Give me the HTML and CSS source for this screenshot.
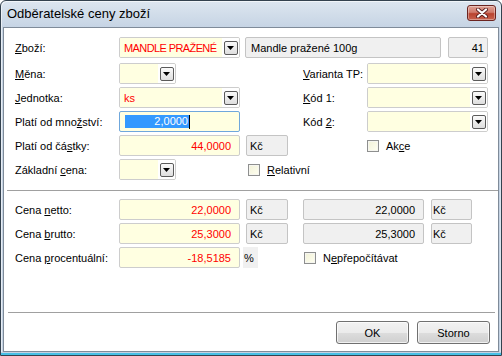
FILE: index.html
```html
<!DOCTYPE html>
<html lang="cs">
<head>
<meta charset="utf-8">
<title>Odběratelské ceny zboží</title>
<link rel="stylesheet" href="styles.css">
</head>
<body>
<div class="window">
  <div class="titlebar">
    <span class="title">Odběratelské ceny zboží</span>
    <div class="close">
      <svg width="14" height="10" viewBox="0 0 14 10">
        <path d="M3 1.5 L11 8.5 M11 1.5 L3 8.5" stroke="#5a1f1f" stroke-width="4" stroke-linecap="round"/>
        <path d="M3 1.5 L11 8.5 M11 1.5 L3 8.5" stroke="#ffffff" stroke-width="2.2" stroke-linecap="round"/>
      </svg>
    </div>
  </div>
  <div class="client">
    <div class="section top">
      <div class="row first">
        <span class="lbl"><u>Z</u>boží:</span>
        <div class="field combo w121"><span class="edit red caps">MANDLE PRAŽENÉ</span><span class="btnarea"><span class="ddbtn"><svg width="7" height="4" viewBox="0 0 7 4"><polygon points="0,0 7,0 3.5,4" fill="#000"/></svg></span></span></div>
        <div class="grey wide">Mandle pražené 100g</div>
        <div class="grey num41">41</div>
      </div>
      <div class="row">
        <span class="lbl"><u>M</u>ěna:</span>
        <div class="field combo w57"><span class="edit"></span><span class="btnarea"><span class="ddbtn"><svg width="7" height="4" viewBox="0 0 7 4"><polygon points="0,0 7,0 3.5,4" fill="#000"/></svg></span></span></div>
        <div class="rcol">
          <span class="rlbl"><u>V</u>arianta TP:</span>
          <div class="field combo w121"><span class="edit"></span><span class="btnarea"><span class="ddbtn"><svg width="7" height="4" viewBox="0 0 7 4"><polygon points="0,0 7,0 3.5,4" fill="#000"/></svg></span></span></div>
        </div>
      </div>
      <div class="row">
        <span class="lbl"><u>J</u>ednotka:</span>
        <div class="field combo w121"><span class="edit red">ks</span><span class="btnarea"><span class="ddbtn"><svg width="7" height="4" viewBox="0 0 7 4"><polygon points="0,0 7,0 3.5,4" fill="#000"/></svg></span></span></div>
        <div class="rcol">
          <span class="rlbl"><u>K</u>ód 1:</span>
          <div class="field combo w121"><span class="edit"></span><span class="btnarea"><span class="ddbtn"><svg width="7" height="4" viewBox="0 0 7 4"><polygon points="0,0 7,0 3.5,4" fill="#000"/></svg></span></span></div>
        </div>
      </div>
      <div class="row">
        <span class="lbl">Platí od mno<u>ž</u>ství:</span>
        <div class="field focus w121"><span class="sel">2,0000</span><span class="caret"></span></div>
        <div class="rcol">
          <span class="rlbl">Kód <u>2</u>:</span>
          <div class="field combo w121"><span class="edit"></span><span class="btnarea"><span class="ddbtn"><svg width="7" height="4" viewBox="0 0 7 4"><polygon points="0,0 7,0 3.5,4" fill="#000"/></svg></span></span></div>
        </div>
      </div>
      <div class="row">
        <span class="lbl">Platí od čá<u>s</u>tky:</span>
        <div class="field num w121 red">44,0000</div>
        <div class="grey cur">Kč</div>
        <div class="rcol">
          <span class="rlbl"></span>
          <label class="check"><span class="cb"></span><span>Ak<u>c</u>e</span></label>
        </div>
      </div>
      <div class="row">
        <span class="lbl">Základní <u>c</u>ena:</span>
        <div class="field combo w57"><span class="edit"></span><span class="btnarea"><span class="ddbtn"><svg width="7" height="4" viewBox="0 0 7 4"><polygon points="0,0 7,0 3.5,4" fill="#000"/></svg></span></span></div>
        <label class="check rel"><span class="cb"></span><span><u>R</u>elativní</span></label>
      </div>
    </div>
    <div class="sep mid"></div>
    <div class="section bottom">
      <div class="row">
        <span class="lbl">Cena <u>n</u>etto:</span>
        <div class="field num w121 red">22,0000</div>
        <div class="grey cur">Kč</div>
        <div class="grey gnum">22,0000</div>
        <div class="grey cur2">Kč</div>
      </div>
      <div class="row">
        <span class="lbl">Cena <u>b</u>rutto:</span>
        <div class="field num w121 red">25,3000</div>
        <div class="grey cur">Kč</div>
        <div class="grey gnum">25,3000</div>
        <div class="grey cur2">Kč</div>
      </div>
      <div class="row">
        <span class="lbl">Cena <u>p</u>rocentuální:</span>
        <div class="field num w121 red">-18,5185</div>
        <span class="pct">%</span>
        <label class="check nep"><span class="cb"></span><span>N<u>e</u>přepočítávat</span></label>
      </div>
    </div>
    <div class="sep foot"></div>
    <div class="buttons">
      <button class="btn">OK</button>
      <button class="btn">Storno</button>
    </div>
  </div>
  <div class="bottom-frame"></div>
</div>
</body>
</html>
```

FILE: styles.css
```css
* { box-sizing: border-box; }
html, body { margin: 0; padding: 0; }
body {
  width: 502px;
  height: 356px;
  overflow: hidden;
  font-family: "Liberation Sans", Arial, sans-serif;
  font-size: 11px;
  color: #000;
  background: #fff;
}
u { text-decoration: underline; text-underline-offset: 1px; }

.window {
  width: 502px;
  height: 356px;
  border: 1px solid #34424f;
  border-radius: 6px 6px 0 0;
  background: linear-gradient(#dde6f0, #c6d4e4 26px, #c3d2e3);
  display: flex;
  flex-direction: column;
  box-shadow: inset 1px 1px 0 rgba(255,255,255,0.6), inset -1px 0 0 rgba(255,255,255,0.4);
}

.titlebar {
  height: 26px;
  flex: none;
  display: flex;
  align-items: center;
  justify-content: space-between;
  padding: 0 5px 0 6px;
}
.title {
  font-size: 13px;
  color: #000;
  line-height: 26px;
}
.close {
  width: 29px;
  height: 16px;
  margin-bottom: 2px;
  border: 1px solid #6b2420;
  border-radius: 3px;
  background: linear-gradient(#e0a195 0%, #d07b6c 45%, #b9432f 55%, #c8634f 100%);
  box-shadow: inset 0 0 0 1px rgba(255,255,255,0.35);
  display: flex;
  align-items: center;
  justify-content: center;
}

.client {
  margin: 0 2px;
  height: 325px;
  flex: none;
  background: #fff;
  border: 1px solid #7f8b99;
  display: flex;
  flex-direction: column;
}

.bottom-frame {
  height: 3px;
  flex: none;
  background: linear-gradient(#c3d2e3 0, #c3d2e3 1px, #46c0e6 1px, #46c0e6 3px);
}

.section {
  display: flex;
  flex-direction: column;
  gap: 3px;
  padding-left: 11px;
  padding-right: 10px;
}
.top { padding-top: 9px; }
.bottom { padding-top: 8px; }
.row.first { margin-bottom: 2px; }

.row {
  display: flex;
  align-items: center;
  height: 21px;
}
.lbl {
  width: 104px;
  flex: none;
  white-space: nowrap;
}

.field {
  height: 21px;
  flex: none;
  border: 1px solid #cdcdcd;
  border-radius: 2px;
  background: #ffffe1;
  display: flex;
  align-items: center;
  white-space: nowrap;
}
.w121 { width: 121px; }
.w57 { width: 57px; }
.red { color: #ff0000; }
.caps { letter-spacing: -0.6px; }

.combo { overflow: hidden; }
.combo .edit {
  flex: 1;
  min-width: 0;
  overflow: hidden;
  height: 100%;
  padding-left: 4px;
  background: #ffffe1;
  display: flex;
  align-items: center;
}
.combo .btnarea {
  width: 17px;
  height: 100%;
  flex: none;
  background: #fff;
  display: flex;
  align-items: center;
  justify-content: center;
}
.ddbtn {
  width: 14px;
  height: 14px;
  border: 1px solid #5a5a5a;
  border-radius: 2px;
  background: linear-gradient(#fafafa, #dedede);
  display: flex;
  align-items: center;
  justify-content: center;
}

.num {
  justify-content: flex-end;
  padding-right: 8px;
}

.focus {
  border-color: #6fa7dc;
  padding-left: 5px;
}
.sel {
  display: inline-block;
  width: 64px;
  height: 13px;
  line-height: 13px;
  background: #3399ff;
  color: #fff;
  text-align: right;
  padding-right: 1px;
}
.caret {
  display: inline-block;
  width: 1px;
  height: 14px;
  background: #000;
}

.grey {
  height: 21px;
  flex: none;
  border: 1px solid #c4c4c4;
  border-radius: 2px;
  background: #f0f0f0;
  display: flex;
  align-items: center;
  white-space: nowrap;
}
.wide { width: 196px; margin-left: 5px; padding-left: 5px; }
.num41 { width: 40px; margin-left: 7px; justify-content: flex-end; padding-right: 3px; }
.cur { width: 42px; margin-left: 6px; padding-left: 3px; }
.gnum { width: 121px; margin-left: 15px; justify-content: flex-end; padding-right: 8px; }
.cur2 { width: 41px; margin-left: 7px; padding-left: 1px; }

.rcol {
  margin-left: auto;
  width: 185px;
  display: flex;
  align-items: center;
}
.rlbl { width: 64px; flex: none; white-space: nowrap; }

.check {
  display: flex;
  align-items: center;
  gap: 7px;
  white-space: nowrap;
}
.cb {
  width: 12px;
  height: 12px;
  flex: none;
  border: 1px solid #8e8f8f;
  background: linear-gradient(135deg, #f1f1d8, #fffff0);
  box-shadow: inset 0 0 0 1px #f6f6f0;
}
.rel { margin-left: 72px; }
.nep { margin-left: 46px; }

.pct {
  width: 15px;
  height: 21px;
  margin-left: 3px;
  background: #f0f0f0;
  display: flex;
  align-items: center;
  padding-left: 1px;
}

.sep { height: 1px; flex: none; background: #a0a0a0; }
.sep.mid { margin: 10px 0 0 3px; }
.sep.foot { margin: 44px 3px 0 4px; }

.buttons {
  display: flex;
  justify-content: flex-end;
  gap: 8px;
  padding: 8px 8px 0 0;
}
.btn {
  width: 73px;
  height: 23px;
  border: 1px solid #707070;
  border-radius: 3px;
  background: linear-gradient(#f2f2f2 0%, #ebebeb 50%, #dddddd 50%, #cfcfcf 100%);
  box-shadow: inset 0 0 0 1px rgba(255,255,255,0.7);
  font-family: "Liberation Sans", Arial, sans-serif;
  font-size: 11px;
  color: #000;
  padding: 0;
}
```
